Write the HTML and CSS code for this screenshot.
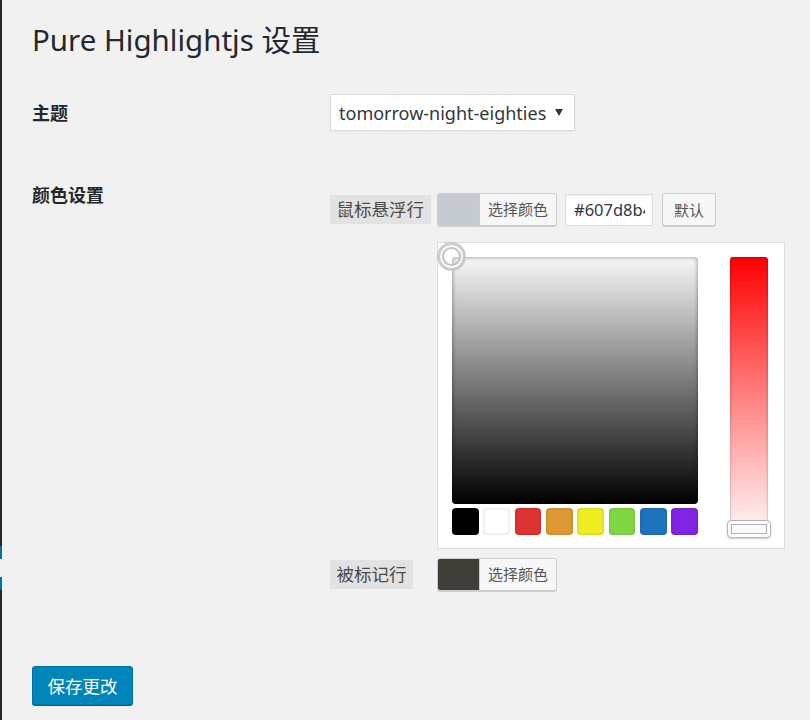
FILE: index.html
```html
<!DOCTYPE html>
<html lang="zh-CN">
<head>
<meta charset="utf-8">
<title>Pure Highlightjs 设置</title>
<link rel="stylesheet" href="styles.css">
</head>
<body>
<div class="page">
  <div class="menu-edge">
    <div class="edge-dark-top"></div>
    <div class="edge-blue"></div>
    <div class="edge-notch"></div>
    <div class="edge-blue"></div>
    <div class="edge-dark-bottom"></div>
  </div>
  <main class="wrap">
    <h1 class="title">Pure Highlightjs 设置</h1>
    <form class="settings">
      <div class="row row-theme">
        <div class="row-label">主题</div>
        <div class="row-field">
          <div class="select">
            <span class="select-text">tomorrow-night-eighties</span>
            <svg class="select-arrow" width="8" height="7" viewBox="0 0 8 7"><path d="M0 0 H8 L4 7 Z" fill="#32373c"/></svg>
          </div>
        </div>
      </div>
      <div class="row row-colors">
        <div class="row-label">颜色设置</div>
        <div class="row-field colors-field">
          <div class="color-line">
            <div class="color-label-slot"><span class="color-label">鼠标悬浮行</span></div>
            <button type="button" class="color-result">
              <span class="color-swatch swatch-hover"></span>
              <span class="color-result-text">选择颜色</span>
            </button>
            <div class="hex-input"><span class="hex-value">#607d8b45</span></div>
            <button type="button" class="btn-default">默认</button>
          </div>
          <div class="picker">
            <div class="picker-main">
              <div class="picker-square">
                <span class="square-handle"></span>
              </div>
              <div class="palette">
                <span class="pal pal-black"></span>
                <span class="pal pal-white"></span>
                <span class="pal pal-red"></span>
                <span class="pal pal-orange"></span>
                <span class="pal pal-yellow"></span>
                <span class="pal pal-green"></span>
                <span class="pal pal-blue"></span>
                <span class="pal pal-purple"></span>
              </div>
            </div>
            <div class="picker-strip">
              <span class="strip-handle"></span>
            </div>
          </div>
          <div class="color-line color-line-2">
            <div class="color-label-slot"><span class="color-label">被标记行</span></div>
            <button type="button" class="color-result">
              <span class="color-swatch swatch-marked"></span>
              <span class="color-result-text">选择颜色</span>
            </button>
          </div>
        </div>
      </div>
      <div class="submit-row">
        <button type="button" class="btn-primary">保存更改</button>
      </div>
    </form>
  </main>
</div>
</body>
</html>
```
FILE: styles.css
```css
* { box-sizing: border-box; }

html, body {
  margin: 0;
  padding: 0;
  height: 100%;
}

body {
  background: #f1f1f1;
  font-family: "Noto Sans", "Noto Sans CJK SC", sans-serif;
  color: #23282d;
}

.page {
  display: flex;
  min-height: 720px;
}

.menu-edge {
  width: 2px;
  flex: 0 0 2px;
  display: flex;
  flex-direction: column;
}
.edge-dark-top { height: 546px; background: #23282d; }
.edge-blue { height: 13px; background: #0073aa; }
.edge-notch { height: 18px; background: #f1f1f1; }
.edge-dark-bottom { flex: 1; background: #23282d; }

.wrap {
  flex: 1;
  padding-left: 30px;
}

.title {
  margin: 21px 0 0;
  font-size: 29.5px;
  line-height: 38px;
  font-weight: 400;
  color: #23282d;
}

.settings { margin-top: 35px; }

.row {
  display: flex;
}
.row-theme { align-items: center; }
.row-label {
  width: 298px;
  flex: 0 0 298px;
  font-size: 18px;
  line-height: 24px;
  font-weight: 700;
  color: #23282d;
}

.select {
  width: 245px;
  height: 37px;
  background: #fff;
  border: 1px solid #ddd;
  box-shadow: 0 1px 2px rgba(0,0,0,0.04);
  display: flex;
  align-items: center;
  padding: 0 11px 0 8px;
  justify-content: space-between;
}
.select-text {
  font-size: 18px;
  color: #32373c;
  white-space: nowrap;
}
.select-arrow { display: block; }

.row-colors { margin-top: 52px; }
.colors-field { padding-top: 10px; }

.color-line {
  display: flex;
  align-items: center;
  height: 33px;
}
.color-label-slot {
  width: 107px;
  flex: 0 0 107px;
  display: flex;
}
.color-label {
  display: inline-block;
  background: #e2e2e2;
  padding: 0 6.5px;
  font-size: 17.5px;
  line-height: 29px;
  color: #4a4a4a;
  white-space: nowrap;
}

.color-result {
  display: flex;
  width: 120px;
  height: 33px;
  padding: 0;
  border: 1px solid #ccc;
  border-radius: 3px;
  background: #f7f7f7;
  box-shadow: 0 1px 0 #ccc;
  overflow: hidden;
  font-family: inherit;
  cursor: pointer;
}
.color-swatch {
  width: 42px;
  flex: 0 0 42px;
  height: 100%;
  border-right: 1px solid #ccc;
}
.swatch-hover { background: #c5cbd1; }
.swatch-marked { background: #413d38; }
.color-result-text {
  flex: 1;
  font-size: 15px;
  line-height: 31px;
  color: #555;
  text-align: center;
}

.hex-input {
  margin-left: 8px;
  width: 88px;
  height: 32px;
  background: #fff;
  border: 1px solid #ddd;
  box-shadow: inset 0 1px 2px rgba(0,0,0,0.07);
  padding: 0 7px 0 8px;
  display: flex;
  align-items: center;
}
.hex-value {
  display: block;
  width: 100%;
  overflow: hidden;
  white-space: nowrap;
  font-size: 16.5px;
  color: #32373c;
}

.btn-default {
  margin-left: 9px;
  width: 54px;
  height: 33px;
  padding: 0;
  border: 1px solid #ccc;
  border-radius: 3px;
  background: #f7f7f7;
  box-shadow: 0 1px 0 #ccc;
  font-family: inherit;
  font-size: 15px;
  color: #555;
}

.picker {
  margin: 16px 0 0 107px;
  width: 348px;
  height: 307px;
  background: #fff;
  border: 1px solid #ddd;
  display: flex;
  padding: 14px 16px 13px 14px;
  gap: 32px;
}
.picker-main {
  width: 246px;
  display: flex;
  flex-direction: column;
}
.picker-square {
  position: relative;
  height: 247px;
  border-radius: 4px;
  background: linear-gradient(to bottom, #f7f7f7 0%, #000 100%);
  box-shadow: inset 0 0 4px rgba(0,0,0,0.45);
}
.square-handle {
  position: absolute;
  left: -15px;
  top: -15px;
  width: 29px;
  height: 29px;
  border-radius: 50%;
  border: 3px solid rgba(195,195,195,0.85);
  box-shadow: inset 0 0 0 2px rgba(255,255,255,0.9), inset 0 0 0 4px rgba(185,185,185,0.85);
}
.palette {
  margin-top: 4px;
  display: flex;
  justify-content: space-between;
}
.pal {
  width: 26.5px;
  height: 27px;
  border-radius: 4px;
  box-shadow: inset 0 0 3px rgba(0,0,0,0.22);
}
.pal-black { background: #000; }
.pal-white { background: #fff; }
.pal-red { background: #dd3333; }
.pal-orange { background: #dd9933; }
.pal-yellow { background: #eeee22; }
.pal-green { background: #81d742; }
.pal-blue { background: #1e73be; }
.pal-purple { background: #8224e3; }

.picker-strip {
  position: relative;
  width: 38px;
  height: 278px;
  border-radius: 3px;
  background: linear-gradient(to bottom, #ff0000 0%, #ff8080 50%, #fff8f8 100%);
  box-shadow: inset 0 0 3px rgba(0,0,0,0.3);
}
.strip-handle {
  position: absolute;
  left: -3px;
  top: 263px;
  width: 44px;
  height: 18px;
  border: 1px solid #b5b5b5;
  border-radius: 4px;
  background: rgba(255,255,255,0.5);
  box-shadow: 0 1px 2px rgba(0,0,0,0.2), inset 0 0 0 3px #fff, inset 0 0 0 4px #b0b0b0;
}

.color-line-2 { margin-top: 9px; }

.submit-row { margin-top: 75px; }
.btn-primary {
  width: 101px;
  height: 39px;
  padding: 0;
  background: #0085ba;
  border: 1px solid #0073aa;
  border-radius: 3px;
  box-shadow: 0 1px 0 #006799;
  color: #fff;
  font-family: inherit;
  font-size: 17.5px;
}
```
